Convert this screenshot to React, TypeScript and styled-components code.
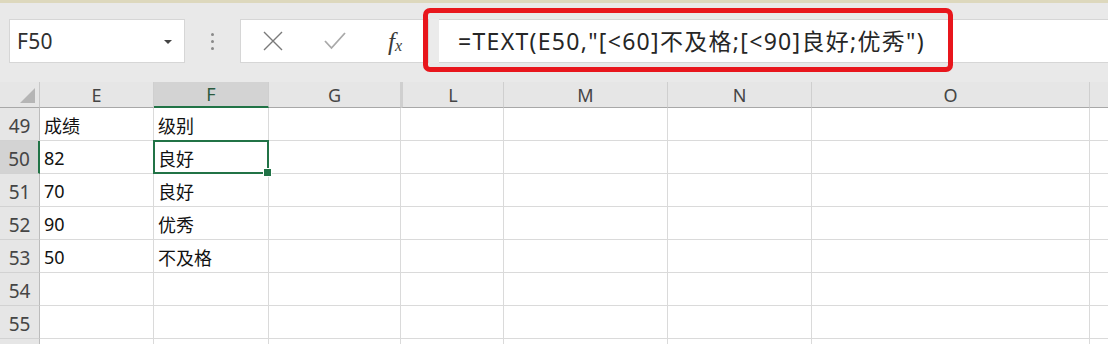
import React from 'react';
import styled, { createGlobalStyle } from 'styled-components';

const GlobalStyle = createGlobalStyle`
    html, body {
        margin: 0;
        padding: 0;
        background: #ffffff;
    }
    * {
        box-sizing: border-box;
    }
`;

const FONT = `'Noto Sans', 'Noto Sans CJK SC', sans-serif`;
const GREEN = '#217346';

const columns = [
    { name: 'E', width: 114 },
    { name: 'F', width: 115 },
    { name: 'G', width: 132 },
    { name: 'L', width: 103 },
    { name: 'M', width: 164 },
    { name: 'N', width: 144 },
    { name: 'O', width: 278 },
    { name: '', width: 40 },
];

// row 56 only peeks in at the bottom edge, so its number is left off
const rows: { num: number | null; score: string; level: string }[] = [
    { num: 49, score: '成绩', level: '级别' },
    { num: 50, score: '82', level: '良好' },
    { num: 51, score: '70', level: '良好' },
    { num: 52, score: '90', level: '优秀' },
    { num: 53, score: '50', level: '不及格' },
    { num: 54, score: '', level: '' },
    { num: 55, score: '', level: '' },
    { num: null, score: '', level: '' },
];

const App: React.FC = () => {
    return (
        <>
            <GlobalStyle />
            <Page>
                <TopStrip />
                <Toolbar>
                    <NameBox>
                        <NameText>F50</NameText>
                        <DropArrow />
                    </NameBox>
                    <Dots>
                        <Dot />
                        <Dot />
                        <Dot />
                    </Dots>
                    <FormulaArea>
                        <FormulaButtons>
                            <IconButton>
                                <svg width="22" height="22" viewBox="0 0 22 22">
                                    <path d="M2 2 L20 20 M20 2 L2 20" stroke="#7a7a7a" strokeWidth="1.4" fill="none" />
                                </svg>
                            </IconButton>
                            <IconButton>
                                <svg width="24" height="20" viewBox="0 0 24 20">
                                    <path d="M2 10 L8.5 17 L22 2" stroke="#a9a9a9" strokeWidth="1.8" fill="none" />
                                </svg>
                            </IconButton>
                            <FxLabel>
                                f<sub>x</sub>
                            </FxLabel>
                        </FormulaButtons>
                        <FormulaGap />
                        <FormulaInput>=TEXT(E50,"[&lt;60]不及格;[&lt;90]良好;优秀")</FormulaInput>
                        <Highlight />
                    </FormulaArea>
                </Toolbar>
                <Sheet>
                    <CornerCell>
                        <Triangle />
                    </CornerCell>
                    {columns.map((c) => (
                        <ColHeader key={c.name || 'end'} $selected={c.name === 'F'} $hiddenBefore={c.name === 'L'}>
                            {c.name}
                        </ColHeader>
                    ))}
                    {rows.map((r, i) => (
                        <React.Fragment key={i}>
                            <RowHeader $selected={r.num === 50}>{r.num}</RowHeader>
                            <Cell>{r.score}</Cell>
                            <Cell $selected={r.num === 50}>{r.level}</Cell>
                            {columns.slice(2).map((c) => (
                                <Cell key={c.name || 'end'} />
                            ))}
                        </React.Fragment>
                    ))}
                </Sheet>
            </Page>
        </>
    );
};

const Page = styled.div`
    width: 1108px;
    height: 344px;
    overflow: hidden;
    background: #e9e9e9;
    font-family: ${FONT};
`;

const TopStrip = styled.div`
    height: 3px;
    background: #ddd8bd;
`;

const Toolbar = styled.div`
    height: 79px;
    display: flex;
    align-items: flex-start;
    padding: 16px 0 0 9px;
    background: #e9e9e9;
`;

const NameBox = styled.div`
    width: 176px;
    height: 44px;
    background: #ffffff;
    border: 1px solid #d6d6d6;
    display: flex;
    align-items: center;
    justify-content: space-between;
    padding: 0 12px 0 7px;
`;

const NameText = styled.span`
    font-size: 21px;
    color: #303030;
    letter-spacing: 0.3px;
`;

const DropArrow = styled.span`
    width: 0;
    height: 0;
    border-left: 4px solid transparent;
    border-right: 4px solid transparent;
    border-top: 4px solid #444;
    margin-top: 1px;
`;

const Dots = styled.div`
    width: 55px;
    height: 44px;
    display: flex;
    flex-direction: column;
    align-items: center;
    justify-content: center;
    gap: 4px;
`;

const Dot = styled.span`
    width: 3px;
    height: 3px;
    border-radius: 50%;
    background: #8a8a8a;
`;

const FormulaArea = styled.div`
    position: relative;
    flex: 1;
    display: flex;
    height: 44px;
`;

const FormulaButtons = styled.div`
    width: 189px;
    height: 44px;
    background: #ffffff;
    border: 1px solid #d6d6d6;
    display: flex;
    align-items: center;
    padding-left: 21px;
`;

const IconButton = styled.span`
    width: 61px;
    display: flex;
    align-items: center;
    justify-content: flex-start;
`;

const FxLabel = styled.span`
    font-family: 'Liberation Serif', 'DejaVu Serif', serif;
    font-style: italic;
    font-size: 25px;
    color: #3a3a3a;
    margin-left: 4px;
    line-height: 1;

    sub {
        font-size: 16px;
        vertical-align: -1px;
    }
`;

const FormulaGap = styled.div`
    width: 10px;
    height: 44px;
    background: #ebebeb;
`;

const FormulaInput = styled.div`
    flex: 1;
    height: 44px;
    background: #ffffff;
    border-top: 1px solid #d6d6d6;
    border-bottom: 1px solid #d6d6d6;
    display: flex;
    align-items: center;
    padding: 0 0 3px 19px;
    font-size: 23px;
    letter-spacing: 1.3px;
    color: #262626;
    white-space: nowrap;
`;

const Highlight = styled.div`
    position: absolute;
    left: 183px;
    top: -11px;
    width: 530px;
    height: 64px;
    border: 5px solid #e8161c;
    border-radius: 7px;
    pointer-events: none;
`;

const Sheet = styled.div`
    display: grid;
    grid-template-columns: 40px ${columns.map((c) => `${c.width}px`).join(' ')};
    grid-template-rows: 26px repeat(8, 33px);
    background: #ffffff;
`;

const CornerCell = styled.div`
    background: #e6e6e6;
    border-right: 1px solid #c8c8c8;
    border-bottom: 1px solid #a8a8a8;
    display: flex;
    align-items: flex-end;
    justify-content: flex-end;
    padding: 0 4px 4px 0;
`;

const Triangle = styled.span`
    width: 0;
    height: 0;
    border-left: 15px solid transparent;
    border-bottom: 15px solid #b5b5b5;
`;

const ColHeader = styled.div<{ $selected?: boolean; $hiddenBefore?: boolean }>`
    background: ${(p) => (p.$selected ? '#d3d3d3' : '#e6e6e6')};
    border-right: 1px solid #cfcfcf;
    border-bottom: ${(p) => (p.$selected ? `2px solid ${GREEN}` : '1px solid #a8a8a8')};
    border-left: ${(p) => (p.$hiddenBefore ? '2px solid #cfcfcf' : 'none')};
    display: flex;
    align-items: center;
    justify-content: center;
    font-size: 18px;
    color: ${(p) => (p.$selected ? '#2a5a3e' : '#454545')};
`;

const RowHeader = styled.div<{ $selected?: boolean }>`
    background: ${(p) => (p.$selected ? '#d3d3d3' : '#e6e6e6')};
    border-right: ${(p) => (p.$selected ? `2px solid ${GREEN}` : '1px solid #bcbcbc')};
    border-bottom: 1px solid #d2d2d2;
    display: flex;
    align-items: center;
    justify-content: center;
    padding-top: 3px;
    font-size: 19px;
    color: #454545;
`;

const Cell = styled.div<{ $selected?: boolean }>`
    position: relative;
    border-right: 1px solid #dadada;
    border-bottom: 1px solid #dadada;
    display: flex;
    align-items: center;
    padding: 2px 0 0 4px;
    font-size: 18px;
    color: #111111;

    ${(p) =>
        p.$selected &&
        `
        &::after {
            content: '';
            position: absolute;
            left: -1px;
            top: -1px;
            right: -1px;
            bottom: -1px;
            border: 2px solid ${GREEN};
        }
        &::before {
            content: '';
            position: absolute;
            right: -4px;
            bottom: -4px;
            width: 7px;
            height: 7px;
            background: ${GREEN};
            border: 1px solid #ffffff;
            z-index: 1;
        }
    `}
`;

export default App;
